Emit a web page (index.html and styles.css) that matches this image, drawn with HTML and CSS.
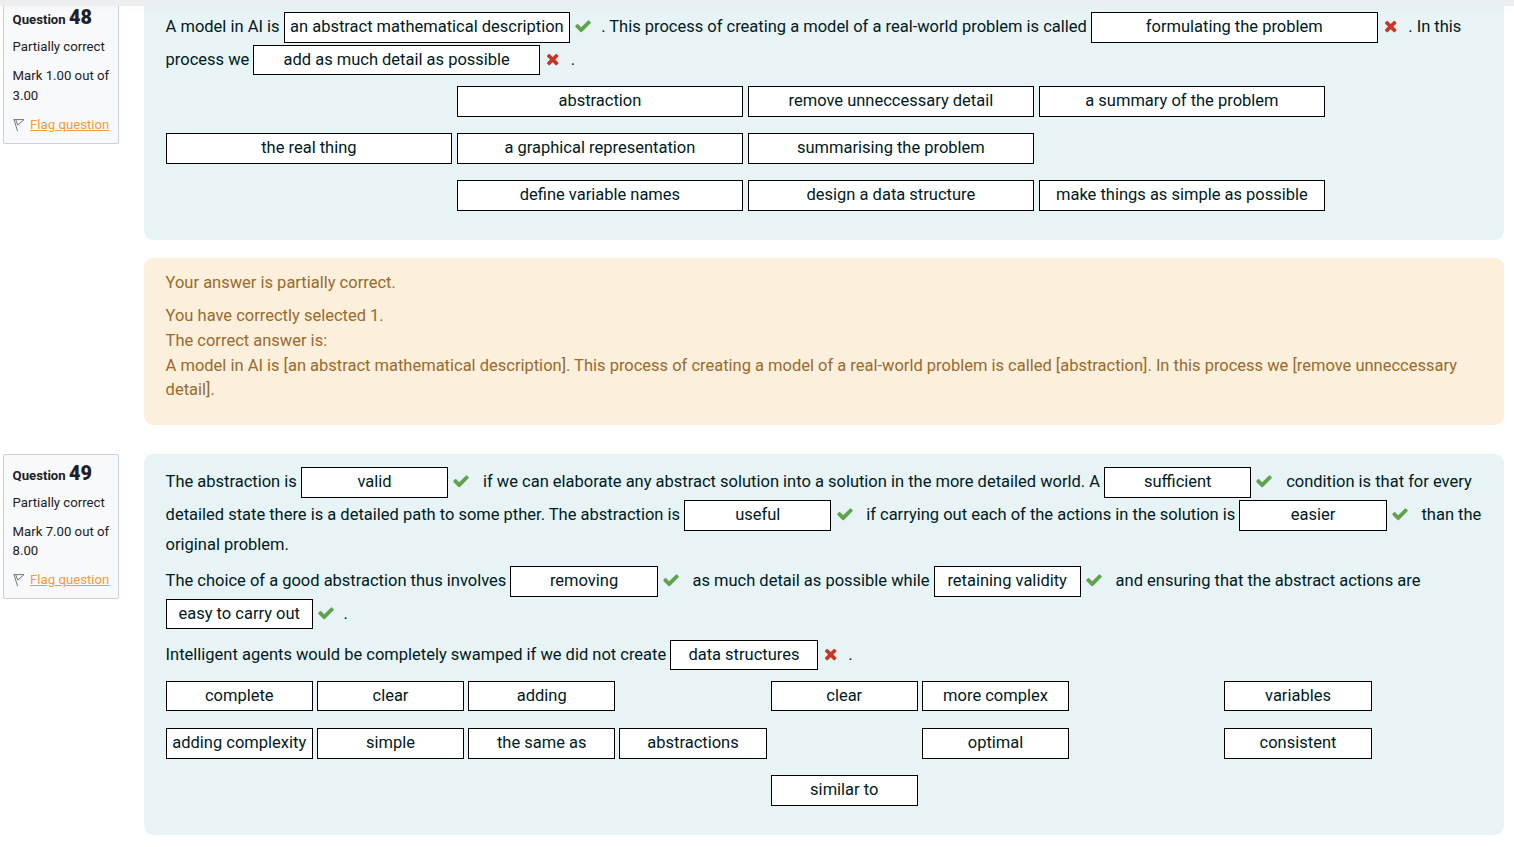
FILE: index.html
```
<!DOCTYPE html>
<html lang="en">
<head>
<meta charset="utf-8">
<title>Quiz review</title>
<link rel="stylesheet" href="styles.css">
</head>
<body>
<svg class="defs" aria-hidden="true">
  <symbol id="check" viewBox="0 0 1792 1792"><path d="M1671 566q0 40-28 68l-724 724-136 136q-28 28-68 28t-68-28l-136-136-362-362q-28-28-28-68t28-68l136-136q28-28 68-28t68 28l294 295 656-657q28-28 68-28t68 28l136 136q28 28 28 68z"/></symbol>
  <symbol id="cross" viewBox="0 0 1792 1792"><path d="M1490 1322q0 40-28 68l-136 136q-28 28-68 28t-68-28l-294-294-294 294q-28 28-68 28t-68-28l-136-136q-28-28-28-68t28-68l294-294-294-294q-28-28-28-68t28-68l136-136q28-28 68-28t68 28l294 294 294-294q28-28 68-28t68 28l136 136q28 28 28 68t-28 68l-294 294 294 294q28 28 28 68z"/></symbol>
  <symbol id="flag" viewBox="0 0 12 14"><path d="M1 1.6L4.6 13.2M.6 1.6L11 1.6L5.4 6.6M2.9 2.1L4.6 6.8L6 6"/></symbol>
</svg>
<header class="topbar"></header>
<main class="quiz">
  <section class="question first">
    <aside class="info">
      <h3 class="number">Question <b>48</b></h3>
      <p class="state">Partially correct</p>
      <p class="grade">Mark 1.00 out of 3.00</p>
      <p class="flag"><svg class="flagicon"><use href="#flag"/></svg><a class="flaglink">Flag question</a></p>
    </aside>
    <div class="content">
      <div class="formulation wide">
        <div class="line"><span>A model in AI is </span><span class="drop">an abstract mathematical description</span><svg class="mark ok"><use href="#check"/></svg><span>. This process of creating a model of a real-world problem is called </span><span class="drop">formulating the problem</span><svg class="mark bad"><use href="#cross"/></svg><span>. In this</span></div>
        <div class="line snug"><span>process we </span><span class="drop">add as much detail as possible</span><svg class="mark bad"><use href="#cross"/></svg><span>.</span></div>
        <div class="choices">
          <span class="drop c2">abstraction</span><span class="drop c3">remove unneccessary detail</span><span class="drop c4">a summary of the problem</span>
          <span class="drop c1">the real thing</span><span class="drop c2">a graphical representation</span><span class="drop c3">summarising the problem</span>
          <span class="drop c2">define variable names</span><span class="drop c3">design a data structure</span><span class="drop c4">make things as simple as possible</span>
        </div>
      </div>
      <div class="feedback">
        <p class="summary">Your answer is partially correct.</p>
        <p>You have correctly selected 1.</p>
        <p>The correct answer is:</p>
        <p>A model in AI is [an abstract mathematical description]. This process of creating a model of a real-world problem is called [abstraction]. In this process we [remove unneccessary detail].</p>
      </div>
    </div>
  </section>
  <section class="question">
    <aside class="info">
      <h3 class="number">Question <b>49</b></h3>
      <p class="state">Partially correct</p>
      <p class="grade">Mark 7.00 out of 8.00</p>
      <p class="flag"><svg class="flagicon"><use href="#flag"/></svg><a class="flaglink">Flag question</a></p>
    </aside>
    <div class="content">
      <div class="formulation narrow">
        <div class="line"><span>The abstraction is </span><span class="drop">valid</span><svg class="mark ok"><use href="#check"/></svg><span> if we can elaborate any abstract solution into a solution in the more detailed world. A </span><span class="drop">sufficient</span><svg class="mark ok"><use href="#check"/></svg><span> condition is that for every</span></div>
        <div class="line"><span>detailed state there is a detailed path to some pther. The abstraction is </span><span class="drop">useful</span><svg class="mark ok"><use href="#check"/></svg><span> if carrying out each of the actions in the solution is </span><span class="drop">easier</span><svg class="mark ok"><use href="#check"/></svg><span> than the</span></div>
        <div class="line plain"><span>original problem.</span></div>
        <div class="line para"><span>The choice of a good abstraction thus involves </span><span class="drop">removing</span><svg class="mark ok"><use href="#check"/></svg><span> as much detail as possible while </span><span class="drop">retaining validity</span><svg class="mark ok"><use href="#check"/></svg><span> and ensuring that the abstract actions are</span></div>
        <div class="line snug"><span class="drop">easy to carry out</span><svg class="mark ok"><use href="#check"/></svg><span>.</span></div>
        <div class="line para snug"><span>Intelligent agents would be completely swamped if we did not create </span><span class="drop">data structures</span><svg class="mark bad"><use href="#cross"/></svg><span>.</span></div>
        <div class="choices">
          <span class="drop short c1">complete</span><span class="drop short c2">clear</span><span class="drop short c3">adding</span><span class="drop short c5">clear</span><span class="drop short c6">more complex</span><span class="drop short c8">variables</span>
          <span class="drop c1">adding complexity</span><span class="drop c2">simple</span><span class="drop c3">the same as</span><span class="drop c4">abstractions</span><span class="drop c6">optimal</span><span class="drop c8">consistent</span>
          <span class="drop c5">similar to</span>
        </div>
      </div>
    </div>
  </section>
</main>
</body>
</html>
```
FILE: styles.css
```
* { box-sizing: border-box; }
body {
  margin: 0;
  height: 847px;
  overflow: hidden;
  background: #fff;
  color: #1d2125;
  font-family: Roboto, "Liberation Sans", sans-serif;
  font-size: 16.49px;
  line-height: 24.75px;
}
p, h3 { margin: 0; }
.defs { position: absolute; width: 0; height: 0; }
.topbar {
  position: fixed;
  inset: 0 0 auto 0;
  height: 6px;
  background: #edeef2;
  box-shadow: 0 2px 4px rgba(0, 0, 0, 0.02);
  z-index: 2;
}
.quiz { display: flex; flex-direction: column; gap: 29px; padding: 0 10px 0 3px; }
.question { display: flex; align-items: flex-start; gap: 25px; }
.info {
  flex: none;
  width: 116px;
  height: 145px;
  padding: 7px 8px 0 8.6px;
  border: 1px solid #cad0d7;
  border-radius: 2px;
  background: #f8f9fa;
  font-size: 13.18px;
  line-height: 19.5px;
}
.first .info { height: 144px; padding-top: 6px; border-top: 0; }
.number { font-size: 13.18px; line-height: 24px; font-weight: 700; white-space: nowrap; }
.number b { font-size: 19.8px; }
.state { margin-top: 5px; }
.grade { margin-top: 9px; }
.first .grade { line-height: 20px; }
.flag { display: flex; align-items: center; margin-top: 9.5px; white-space: nowrap; }
.flagicon { width: 12px; height: 14px; margin-right: 5.5px; fill: none; stroke: #777; stroke-width: 1; }
.flaglink { color: #f59b38; text-decoration: underline; }
.content { flex: 1; }
.formulation { border-radius: 9px; background: #e7f3f5; color: #001a1e; padding: 11px 0 0 21.6px; }
.wide { height: 240px; --drop: 286.6px; --pitch: 291px; border-radius: 0 0 9px 9px; }
.narrow { height: 381px; padding-top: 12px; --drop: 147.3px; --pitch: 151.25px; }
.line { display: flex; align-items: center; height: 33px; white-space: pre; }
.line.plain { height: 27px; }
.line.para { margin-top: 6px; }
.narrow .line.para ~ .line.para { margin-top: 8px; }
.drop {
  flex: none;
  width: var(--drop);
  height: 30.5px;
  border: 1px solid #000;
  background: #fff;
  text-align: center;
  line-height: 27px;
  white-space: nowrap;
}
.snug .drop { height: 30px; margin-bottom: 0.6px; }
.drop.short { height: 30px; }
.mark { flex: none; width: 18px; height: 18px; margin: 0 8.6px 2.6px 4.1px; }
.wide .mark { margin-right: 8.9px; }
.mark.bad { width: 17.4px; margin-left: 4.4px; margin-right: 8.9px; }
.ok { fill: #5fa34c; }
.bad { fill: #cb3323; }
.choices { display: grid; grid-template-columns: repeat(auto-fill, var(--pitch)); grid-auto-rows: 47px; padding-top: 9px; }
.c1 { grid-column: 1; }
.c2 { grid-column: 2; }
.c3 { grid-column: 3; }
.c4 { grid-column: 4; }
.c5 { grid-column: 5; }
.c6 { grid-column: 6; }
.c8 { grid-column: 8; }
.feedback {
  height: 167px;
  margin-top: 18px;
  padding: 13px 21px 0 21.6px;
  border-radius: 9px;
  background: #fcefdc;
  color: #996a2b;
}
.summary { margin-bottom: 8.25px; }
```
